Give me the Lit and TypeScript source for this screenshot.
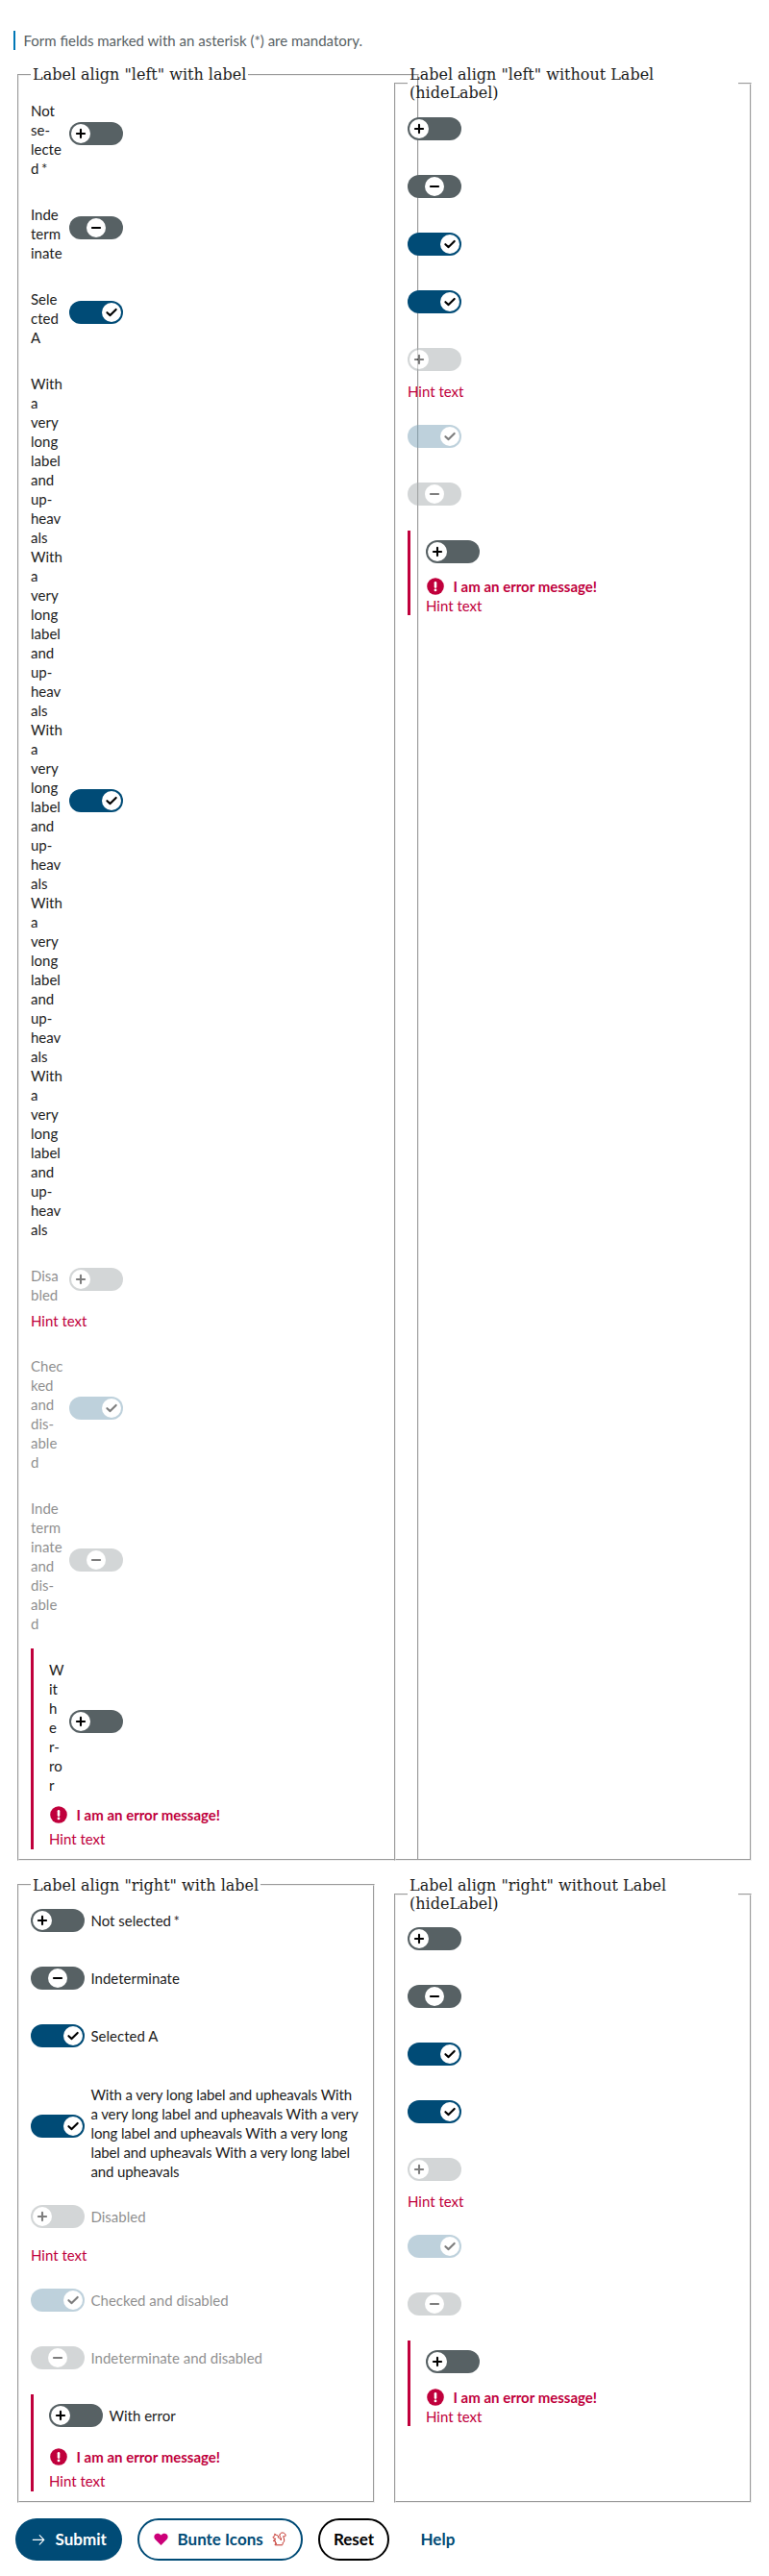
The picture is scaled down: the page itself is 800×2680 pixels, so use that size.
import { LitElement, html, css, svg, nothing } from "lit";
import { classMap } from "lit/directives/class-map.js";

type State = "off" | "mixed" | "on";
type Align = "left" | "right" | "hidden";

interface Field {
  state: State;
  narrow: string[];
  wide: string[];
  required?: boolean;
  disabled?: boolean;
  hint?: boolean;
  error?: boolean;
}

const LONG_NARROW = ["With", "a", "very", "long", "label", "and", "up-", "heav", "als"];

const FIELDS: Field[] = [
  { state: "off", narrow: ["Not", "se-", "lecte", "d"], wide: ["Not selected"], required: true },
  { state: "mixed", narrow: ["Inde", "term", "inate"], wide: ["Indeterminate"] },
  { state: "on", narrow: ["Sele", "cted", "A"], wide: ["Selected A"] },
  {
    state: "on",
    narrow: Array.from({ length: 5 }, () => LONG_NARROW).flat(),
    wide: [
      "With a very long label and upheavals With",
      "a very long label and upheavals With a very",
      "long label and upheavals With a very long",
      "label and upheavals With a very long label",
      "and upheavals",
    ],
  },
  { state: "off", narrow: ["Disa", "bled"], wide: ["Disabled"], disabled: true, hint: true },
  { state: "on", narrow: ["Chec", "ked", "and", "dis-", "able", "d"], wide: ["Checked and disabled"], disabled: true },
  {
    state: "mixed",
    narrow: ["Inde", "term", "inate", "and", "dis-", "able", "d"],
    wide: ["Indeterminate and disabled"],
    disabled: true,
  },
  { state: "off", narrow: ["W", "it", "h", "e", "r-", "ro", "r"], wide: ["With error"], hint: true, error: true },
];

const GLYPHS = {
  off: svg`<path d="M10 5.9v8.2M5.9 10h8.2" />`,
  mixed: svg`<path d="M5.9 10h8.2" />`,
  on: svg`<path d="M5.4 10.2l3.2 2.9 6.1-6.2" />`,
};

class ToggleField extends LitElement {
  static properties = { field: { attribute: false }, align: {} };
  declare field: Field;
  declare align: Align;

  static styles = css`
    :host {
      display: block;
      margin-bottom: 14px;
      font: 15px/20px Lato, "Open Sans", sans-serif;
      color: #1c1c1c;
    }
    :host(:last-of-type) { margin-bottom: 0; }
    .item.error { border-left: 3px solid #c0003c; padding-left: 16px; }
    .row { display: flex; align-items: center; }
    .control { flex: none; padding: 10px 0 12px; }
    .left .control { padding: 0 0 1px; }
    .track {
      box-sizing: border-box;
      display: flex;
      width: 56px;
      height: 24px;
      padding: 2px;
      border-radius: 12px;
      background: #576164;
    }
    .track.mixed { justify-content: center; }
    .track.on { justify-content: flex-end; background: #004b76; }
    .thumb { width: 20px; height: 20px; border-radius: 50%; background: #fff; }
    .thumb svg { display: block; fill: none; stroke: #000; stroke-width: 2.1; stroke-linecap: round; stroke-linejoin: round; }
    .disabled .track { opacity: 0.5; background: #a9afb0; }
    .disabled .track.on { background: #7fa5ba; }
    .label { padding: 12.5px 0 1.5px; white-space: nowrap; }
    .right .label { margin-left: 6.5px; }
    .right .label:not(.single) { letter-spacing: -0.12px; }
    .right .single { padding: 1px 0 2.5px; }
    .left .label { width: 40px; }
    .left.error .label { width: 21px; }
    .disabled .label { opacity: 0.5; }
    .star { margin-left: 2.5px; }
    .hint { color: #c0003c; padding-bottom: 1px; margin-top: 5px; }
    .right:not(.error) .hint { margin-top: 5.4px; }
    .hidden .hint { margin-top: -1px; }
    .hidden.error .hint { margin-top: 0; padding-bottom: 0; }
    .message {
      display: flex;
      align-items: center;
      height: 20px;
      margin-top: 6px;
      padding-top: 3px;
      font-weight: 700;
      color: #c0003c;
    }
    .hidden .message { margin-top: 0; padding-top: 2.4px; }
    .message svg { display: block; margin: 0 9.5px 0 1px; }
  `;

  render() {
    const f = this.field;
    const a = this.align;
    const lines = a === "left" ? f.narrow : f.wide;
    const label =
      a === "hidden"
        ? nothing
        : html`<div class=${classMap({ label: true, single: lines.length === 1 })}>
            ${lines.map((l, i) => html`<div>${l}${f.required && i === lines.length - 1 ? html`<span class="star">*</span>` : nothing}</div>`)}
          </div>`;
    const control = html`<div class="control">
      <div class="track ${f.state}">
        <div class="thumb"><svg width="20" height="20" viewBox="0 0 20 20">${GLYPHS[f.state]}</svg></div>
      </div>
    </div>`;
    return html`<div class=${classMap({ item: true, [a]: true, disabled: !!f.disabled, error: !!f.error })}>
      <div class="row">${a === "left" ? [label, control] : [control, label]}</div>
      ${f.error
        ? html`<div class="message">
            <svg width="18" height="18" viewBox="0 0 18 18">
              <circle cx="9" cy="9" r="8.8" fill="#c0003c" />
              <path d="M9 5.3v4.3" stroke="#fff" stroke-width="2.6" stroke-linecap="round" />
              <circle cx="9" cy="12.9" r="1.4" fill="#fff" />
            </svg>
            <span>I am an error message!</span>
          </div>`
        : nothing}
      ${f.hint ? html`<div class="hint">Hint text</div>` : nothing}
    </div>`;
  }
}
customElements.define("toggle-field", ToggleField);

class AppRoot extends LitElement {
  static styles = css`
    :host { display: block; padding: 32px 16px 0; color: #1c1c1c; background: #fff; }
    .note {
      margin: 0 0 16px -2px;
      padding-left: 8.5px;
      border-left: 2px solid #0077b6;
      font: 15px/20px Lato, "Open Sans", sans-serif;
      color: #576164;
    }
    .grid { display: grid; grid-template-columns: 376px 376px; gap: 16px; }
    fieldset {
      box-sizing: border-box;
      min-width: 0;
      margin: 0 2px;
      padding: 5.6px 12px 10px;
      font: 16px "DejaVu Serif", serif;
    }
    fieldset.wide { width: 418px; }
    legend { padding: 0 2px; }
    .actions { display: flex; gap: 16px; margin-top: 16px; }
    .btn {
      box-sizing: border-box;
      display: flex;
      align-items: center;
      height: 44px;
      margin: 0;
      padding: 0 15px;
      border: 2px solid transparent;
      border-radius: 22px;
      background: #fff;
      font: 700 17px/20px Lato, "Open Sans", sans-serif;
      color: #004b76;
      white-space: nowrap;
    }
    .submit { width: 111px; gap: 10.5px; background: #004b76; color: #fff; }
    .color { width: 172px; gap: 9.5px; border-color: #004b76; }
    .reset { width: 74px; justify-content: center; padding: 0; border-color: #000; color: #000; }
    .help { padding: 0 14.5px; }
    .btn svg { flex: none; }
  `;

  private group(title: string, align: Align, wide = false) {
    return html`<fieldset class=${classMap({ wide })}>
      <legend>${title}</legend>
      ${FIELDS.map((f) => html`<toggle-field .field=${f} .align=${align}></toggle-field>`)}
    </fieldset>`;
  }

  render() {
    return html`
      <div class="note">Form fields marked with an asterisk (*) are mandatory.</div>
      <div class="grid">
        ${this.group('Label align "left" with label', "left", true)}
        ${this.group('Label align "left" without Label (hideLabel)', "hidden")}
        ${this.group('Label align "right" with label', "right")}
        ${this.group('Label align "right" without Label (hideLabel)', "hidden")}
      </div>
      <div class="actions">
        <button class="btn submit">
          <svg width="14" height="14" viewBox="0 0 14 14" fill="none" stroke="#fff" stroke-width="1.1" stroke-linecap="round" stroke-linejoin="round">
            <path d="M1.3 7.4h11.4M8.2 2.7l4.6 4.7-4.6 4.7" />
          </svg>
          <span>Submit</span>
        </button>
        <button class="btn color">
          <svg width="15" height="14" viewBox="0 0 15 14" fill="#cc0078">
            <path d="M7.5 13L1.500 7C-.2 5.100 .1 2.600 1.700 1.400 3.500 .1 5.900 .6 7.500 2.500 9.100 .6 11.500 .1 13.300 1.400 14.900 2.600 15.200 5.100 13.500 7Z" />
          </svg>
          <span>Bunte Icons</span>
          <svg width="15" height="15" viewBox="0 0 15 15" fill="none" stroke="#c0271f" stroke-width="1" stroke-linecap="round" stroke-linejoin="round">
            <path d="M3 2.500l1.300 .8C5.900 3.300 6.800 4.400 6.300 5.900 8 6.500 9 7.500 9.300 8.700V6.500C8.300 5.300 7.700 4.300 8 3 8.400 1.500 9.800 .8 11.300 1 13.200 1.200 14.300 2.700 14.100 4.300 13.300 5 12.400 4.900 11.700 4.600 11.700 6 12.900 7.300 12.700 9.300 12.500 10.800 11.700 11.400 10.900 11.700 11.500 12.500 11.300 13.500 10.400 13.800H3.200C2.700 12.800 3.500 12.200 4.800 12.200L3.400 11.300V9.700H1.600C1.200 8.800 1.900 8.300 3.300 8.300V6.900C1.800 6.900 .9 6.400 .9 5.600L2.800 4Z" />
          </svg>
        </button>
        <button class="btn reset">Reset</button>
        <button class="btn help">Help</button>
      </div>
    `;
  }
}
customElements.define("app-root", AppRoot);
